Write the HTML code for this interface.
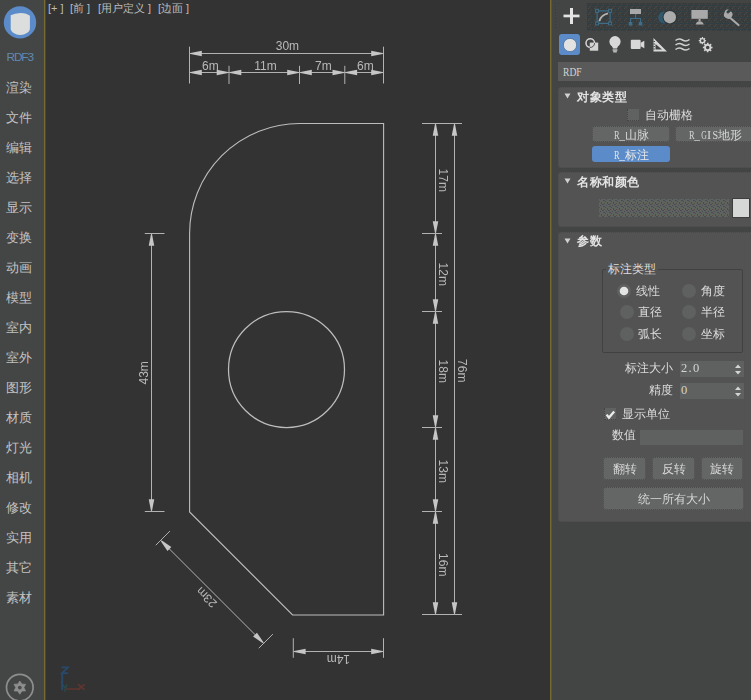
<!DOCTYPE html>
<html><head><meta charset="utf-8"><style>
*{margin:0;padding:0;box-sizing:border-box}
html,body{width:751px;height:700px;overflow:hidden;background:#333}
body{position:relative;font-family:'Liberation Sans',sans-serif}
.a{position:absolute}
#side{left:0;top:0;width:44px;height:700px;background:#444545}
#gl1{left:43px;top:0;width:3px;height:700px;background:linear-gradient(90deg,#43464a 0 1px,#756a32 1px 2px,#4b4637 2px 3px)}
#vp{left:46px;top:0;width:504px;height:700px;background:#333333}
#gl2{left:550px;top:0;width:2px;height:700px;background:linear-gradient(90deg,#756a32 0 1px,#5c533a 1px 2px)}
#panel{left:552px;top:0;width:199px;height:700px;background:#434544}
.menu{position:absolute;left:6px;font-size:13px;color:#c2c2c2;line-height:16px;letter-spacing:0px}
.vlabel{position:absolute;top:1px;font-size:11px;color:#bdbdbd;line-height:14px;white-space:pre}
</style></head><body>
<div class="a" id="side"></div>
<div class="a" id="gl1"></div>
<div class="a" id="vp"></div>
<div class="a" id="gl2"></div>
<div class="a" id="panel"></div>
<svg class="a" style="left:0;top:0" width="44" height="44"><circle cx="20" cy="22.4" r="16.2" fill="#5b8bc8"/>
<path d="M10.7 15.2 Q14.5 13 20.7 12.9 Q26.8 13 29.9 15.8 L29.9 28.8 C29.6 32.2 25.2 34.9 20.2 35 C15.2 34.9 11 32.2 10.7 28.8 Z" fill="#dcdedd"/></svg>
<div class="a" style="left:6.5px;top:50px;font-size:11.8px;color:#6089b3;line-height:14px;letter-spacing:-1.1px">RDF3</div>
<div class="menu" style="top:80px">渲染</div>
<div class="menu" style="top:110px">文件</div>
<div class="menu" style="top:140px">编辑</div>
<div class="menu" style="top:170px">选择</div>
<div class="menu" style="top:200px">显示</div>
<div class="menu" style="top:230px">变换</div>
<div class="menu" style="top:260px">动画</div>
<div class="menu" style="top:290px">模型</div>
<div class="menu" style="top:320px">室内</div>
<div class="menu" style="top:350px">室外</div>
<div class="menu" style="top:380px">图形</div>
<div class="menu" style="top:410px">材质</div>
<div class="menu" style="top:440px">灯光</div>
<div class="menu" style="top:470px">相机</div>
<div class="menu" style="top:500px">修改</div>
<div class="menu" style="top:530px">实用</div>
<div class="menu" style="top:560px">其它</div>
<div class="menu" style="top:590px">素材</div>
<svg class="a" style="left:0;top:668px" width="44" height="32">
<circle cx="19.8" cy="19.6" r="13.3" fill="none" stroke="#8e8e8e" stroke-width="1.7"/>
<path d="M19.80 13.00 L21.80 16.14 L25.52 16.30 L23.80 19.60 L25.52 22.90 L21.80 23.06 L19.80 26.20 L17.80 23.06 L14.08 22.90 L15.80 19.60 L14.08 16.30 L17.80 16.14 Z" fill="#8e8e8e" stroke="#8e8e8e" stroke-width="0.8" stroke-linejoin="round"/>
<circle cx="19.8" cy="19.6" r="1.9" fill="#4a4b4b"/></svg>
<div class="vlabel" style="left:48px">[+ ]</div><div class="vlabel" style="left:70px">[前 ]</div><div class="vlabel" style="left:98px">[用户定义 ]</div><div class="vlabel" style="left:158px">[边面 ]</div>
<svg class="a" style="left:55px;top:660px" width="40" height="40">
<path d="M6.6 7.4 H13 L7 13.2 H13.2" stroke="#29496a" stroke-width="1.8" fill="none"/>
<line x1="7.2" y1="13" x2="7.2" y2="30" stroke="#29496a" stroke-width="2"/>
<path d="M8 24.5 L10 28 M12 24.5 L9.5 31.5" stroke="#2c4a4a" stroke-width="1.5" fill="none"/>
<line x1="11.5" y1="29" x2="25" y2="29" stroke="#5c3530" stroke-width="1.6"/>
<path d="M23 24.3 L29.6 29.8 M29.6 24.3 L23 29.8" stroke="#5c3530" stroke-width="1.8" fill="none"/></svg>
<svg style="position:absolute;left:0;top:0;will-change:transform" width="751" height="700"><path d="M383.6 123.5 L383.6 615 L292.6 615 L189.6 512 L189.6 233.5 A110 110 0 0 1 299.6 123.5 Z" fill="none" stroke="#bdbdbd" stroke-width="1.1"/><circle cx="286.5" cy="369.5" r="58" fill="none" stroke="#bdbdbd" stroke-width="1.25"/><line x1="189.50" y1="46.70" x2="189.50" y2="83.50" stroke="#b2b2b2" stroke-width="1"/><line x1="383.50" y1="46.70" x2="383.50" y2="83.50" stroke="#b2b2b2" stroke-width="1"/><line x1="189.50" y1="53.50" x2="383.50" y2="53.50" stroke="#b2b2b2" stroke-width="1"/><polygon points="190.50,52.90 201.80,50.75 201.80,56.25 190.50,54.10" fill="#c6c6c6"/><polygon points="382.50,54.10 371.20,56.25 371.20,50.75 382.50,52.90" fill="#c6c6c6"/><text x="287.40" y="46.30" transform="rotate(0 287.40 46.30)" text-anchor="middle" dominant-baseline="central" font-family="Liberation Sans" font-size="12" fill="#b9b9b9">30m</text><line x1="229.00" y1="65.80" x2="229.00" y2="84.00" stroke="#b2b2b2" stroke-width="1"/><line x1="299.50" y1="65.80" x2="299.50" y2="84.00" stroke="#b2b2b2" stroke-width="1"/><line x1="344.80" y1="65.80" x2="344.80" y2="84.00" stroke="#b2b2b2" stroke-width="1"/><line x1="189.50" y1="72.50" x2="229.00" y2="72.50" stroke="#b2b2b2" stroke-width="1"/><polygon points="190.50,71.90 201.80,69.75 201.80,75.25 190.50,73.10" fill="#c6c6c6"/><polygon points="228.00,73.10 216.70,75.25 216.70,69.75 228.00,71.90" fill="#c6c6c6"/><text x="210.45" y="65.90" transform="rotate(0 210.45 65.90)" text-anchor="middle" dominant-baseline="central" font-family="Liberation Sans" font-size="12" fill="#b9b9b9">6m</text><line x1="229.00" y1="72.50" x2="299.50" y2="72.50" stroke="#b2b2b2" stroke-width="1"/><polygon points="230.00,71.90 241.30,69.75 241.30,75.25 230.00,73.10" fill="#c6c6c6"/><polygon points="298.50,73.10 287.20,75.25 287.20,69.75 298.50,71.90" fill="#c6c6c6"/><text x="265.45" y="65.90" transform="rotate(0 265.45 65.90)" text-anchor="middle" dominant-baseline="central" font-family="Liberation Sans" font-size="12" fill="#b9b9b9">11m</text><line x1="299.50" y1="72.50" x2="344.80" y2="72.50" stroke="#b2b2b2" stroke-width="1"/><polygon points="300.50,71.90 311.80,69.75 311.80,75.25 300.50,73.10" fill="#c6c6c6"/><polygon points="343.80,73.10 332.50,75.25 332.50,69.75 343.80,71.90" fill="#c6c6c6"/><text x="323.35" y="65.90" transform="rotate(0 323.35 65.90)" text-anchor="middle" dominant-baseline="central" font-family="Liberation Sans" font-size="12" fill="#b9b9b9">7m</text><line x1="344.80" y1="72.50" x2="383.50" y2="72.50" stroke="#b2b2b2" stroke-width="1"/><polygon points="345.80,71.90 357.10,69.75 357.10,75.25 345.80,73.10" fill="#c6c6c6"/><polygon points="382.50,73.10 371.20,75.25 371.20,69.75 382.50,71.90" fill="#c6c6c6"/><text x="365.35" y="65.90" transform="rotate(0 365.35 65.90)" text-anchor="middle" dominant-baseline="central" font-family="Liberation Sans" font-size="12" fill="#b9b9b9">6m</text><line x1="422.00" y1="123.50" x2="462.00" y2="123.50" stroke="#b2b2b2" stroke-width="1"/><line x1="422.00" y1="614.50" x2="462.00" y2="614.50" stroke="#b2b2b2" stroke-width="1"/><line x1="422.00" y1="233.50" x2="442.00" y2="233.50" stroke="#b2b2b2" stroke-width="1"/><line x1="422.00" y1="311.50" x2="442.00" y2="311.50" stroke="#b2b2b2" stroke-width="1"/><line x1="422.00" y1="427.50" x2="442.00" y2="427.50" stroke="#b2b2b2" stroke-width="1"/><line x1="422.00" y1="511.50" x2="442.00" y2="511.50" stroke="#b2b2b2" stroke-width="1"/><line x1="435.50" y1="123.50" x2="435.50" y2="233.50" stroke="#b2b2b2" stroke-width="1"/><polygon points="436.10,124.50 438.25,135.80 432.75,135.80 434.90,124.50" fill="#c6c6c6"/><polygon points="434.90,232.50 432.75,221.20 438.25,221.20 436.10,232.50" fill="#c6c6c6"/><text x="443.00" y="180.20" transform="rotate(90 443.00 180.20)" text-anchor="middle" dominant-baseline="central" font-family="Liberation Sans" font-size="12" fill="#b9b9b9">17m</text><line x1="435.50" y1="233.50" x2="435.50" y2="311.50" stroke="#b2b2b2" stroke-width="1"/><polygon points="436.10,234.50 438.25,245.80 432.75,245.80 434.90,234.50" fill="#c6c6c6"/><polygon points="434.90,310.50 432.75,299.20 438.25,299.20 436.10,310.50" fill="#c6c6c6"/><text x="443.00" y="274.20" transform="rotate(90 443.00 274.20)" text-anchor="middle" dominant-baseline="central" font-family="Liberation Sans" font-size="12" fill="#b9b9b9">12m</text><line x1="435.50" y1="311.50" x2="435.50" y2="427.50" stroke="#b2b2b2" stroke-width="1"/><polygon points="436.10,312.50 438.25,323.80 432.75,323.80 434.90,312.50" fill="#c6c6c6"/><polygon points="434.90,426.50 432.75,415.20 438.25,415.20 436.10,426.50" fill="#c6c6c6"/><text x="443.00" y="371.20" transform="rotate(90 443.00 371.20)" text-anchor="middle" dominant-baseline="central" font-family="Liberation Sans" font-size="12" fill="#b9b9b9">18m</text><line x1="435.50" y1="427.50" x2="435.50" y2="511.50" stroke="#b2b2b2" stroke-width="1"/><polygon points="436.10,428.50 438.25,439.80 432.75,439.80 434.90,428.50" fill="#c6c6c6"/><polygon points="434.90,510.50 432.75,499.20 438.25,499.20 436.10,510.50" fill="#c6c6c6"/><text x="443.00" y="471.20" transform="rotate(90 443.00 471.20)" text-anchor="middle" dominant-baseline="central" font-family="Liberation Sans" font-size="12" fill="#b9b9b9">13m</text><line x1="435.50" y1="511.50" x2="435.50" y2="614.50" stroke="#b2b2b2" stroke-width="1"/><polygon points="436.10,512.50 438.25,523.80 432.75,523.80 434.90,512.50" fill="#c6c6c6"/><polygon points="434.90,613.50 432.75,602.20 438.25,602.20 436.10,613.50" fill="#c6c6c6"/><text x="443.00" y="564.70" transform="rotate(90 443.00 564.70)" text-anchor="middle" dominant-baseline="central" font-family="Liberation Sans" font-size="12" fill="#b9b9b9">16m</text><line x1="454.50" y1="123.50" x2="454.50" y2="614.50" stroke="#b2b2b2" stroke-width="1"/><polygon points="455.10,124.50 457.25,135.80 451.75,135.80 453.90,124.50" fill="#c6c6c6"/><polygon points="453.90,613.50 451.75,602.20 457.25,602.20 455.10,613.50" fill="#c6c6c6"/><text x="462.00" y="370.70" transform="rotate(90 462.00 370.70)" text-anchor="middle" dominant-baseline="central" font-family="Liberation Sans" font-size="12" fill="#b9b9b9">76m</text><line x1="144.80" y1="233.50" x2="164.50" y2="233.50" stroke="#b2b2b2" stroke-width="1"/><line x1="144.80" y1="511.50" x2="164.50" y2="511.50" stroke="#b2b2b2" stroke-width="1"/><line x1="151.50" y1="233.50" x2="151.50" y2="511.50" stroke="#b2b2b2" stroke-width="1"/><polygon points="152.10,234.50 154.25,245.80 148.75,245.80 150.90,234.50" fill="#c6c6c6"/><polygon points="150.90,510.50 148.75,499.20 154.25,499.20 152.10,510.50" fill="#c6c6c6"/><text x="144.30" y="372.80" transform="rotate(-90 144.30 372.80)" text-anchor="middle" dominant-baseline="central" font-family="Liberation Sans" font-size="12" fill="#b9b9b9">43m</text><line x1="293.30" y1="638.20" x2="293.30" y2="657.80" stroke="#b2b2b2" stroke-width="1"/><line x1="383.50" y1="638.20" x2="383.50" y2="657.80" stroke="#b2b2b2" stroke-width="1"/><line x1="293.30" y1="651.50" x2="383.50" y2="651.50" stroke="#b2b2b2" stroke-width="1"/><polygon points="294.30,650.90 305.60,648.75 305.60,654.25 294.30,652.10" fill="#c6c6c6"/><polygon points="382.50,652.10 371.20,654.25 371.20,648.75 382.50,650.90" fill="#c6c6c6"/><text x="338.40" y="659.30" transform="rotate(180 338.40 659.30)" text-anchor="middle" dominant-baseline="central" font-family="Liberation Sans" font-size="12" fill="#b9b9b9">14m</text><line x1="160.72" y1="540.28" x2="263.72" y2="643.28" stroke="#b2b2b2" stroke-width="1"/><polygon points="161.85,540.56 171.36,547.03 167.47,550.92 161.00,541.41" fill="#c6c6c6"/><polygon points="262.59,643.00 253.08,636.53 256.97,632.64 263.44,642.15" fill="#c6c6c6"/><line x1="155.77" y1="545.23" x2="169.91" y2="531.09" stroke="#b2b2b2" stroke-width="1"/><line x1="258.77" y1="648.23" x2="272.91" y2="634.09" stroke="#b2b2b2" stroke-width="1"/><text x="206.71" y="597.29" transform="rotate(225 206.71 597.29)" text-anchor="middle" dominant-baseline="central" font-family="Liberation Sans" font-size="12" fill="#b9b9b9">23m</text></svg><svg class="a" style="left:552px;top:0" width="199" height="60"><line x1="3.5" y1="3" x2="3.5" y2="29" stroke="#2e3f44" stroke-dasharray="1 2"/><line x1="3" y1="3.5" x2="9" y2="3.5" stroke="#2e3f44" stroke-dasharray="1 2"/><rect x="11.5" y="14.6" width="16" height="2.7" fill="#e4e4e4"/><rect x="18" y="8" width="3" height="16" fill="#e4e4e4"/></svg><svg class="a" style="left:587px;top:3px" width="164" height="28"><defs><pattern id="dith" width="6" height="6" patternUnits="userSpaceOnUse"><rect width="6" height="6" fill="#3c3d3d"/><rect x="0" y="0" width="1" height="1" fill="#2b3c42"/><rect x="2" y="0" width="1" height="1" fill="#2b3c42"/><rect x="4" y="1" width="1" height="1" fill="#5b3a33"/><rect x="1" y="2" width="1" height="1" fill="#2b3c42"/><rect x="3" y="2" width="1" height="1" fill="#2b3c42"/><rect x="5" y="2" width="1" height="1" fill="#2b3c42"/><rect x="0" y="4" width="1" height="1" fill="#2b3c42"/><rect x="2" y="4" width="1" height="1" fill="#5b3a33"/><rect x="4" y="4" width="1" height="1" fill="#2b3c42"/><rect x="1" y="5" width="1" height="1" fill="#4a4a4a"/><rect x="3" y="3" width="1" height="1" fill="#4a4a4a"/><rect x="5" y="5" width="1" height="1" fill="#2b3c42"/></pattern></defs><rect width="164" height="28" fill="url(#dith)"/></svg><svg class="a" style="left:587px;top:0" width="164" height="60"><path d="M10.1 12 V22.4 M11 23.4 H22 M23.1 12 V22.4 M11 10.8 H22" stroke="#3f6c86" stroke-width="1.2" fill="none"/><rect x="8.6" y="9.3" width="3" height="3" fill="none" stroke="#3f6c86" stroke-width="1"/><rect x="21.6" y="9.3" width="3" height="3" fill="none" stroke="#3f6c86" stroke-width="1"/><rect x="8.6" y="21.9" width="3" height="3" fill="none" stroke="#3f6c86" stroke-width="1"/><rect x="21.6" y="21.9" width="3" height="3" fill="none" stroke="#3f6c86" stroke-width="1"/><path d="M12.3 21.2 Q14 15 21 13.4" stroke="#b4b4b4" stroke-width="1.8" fill="none"/><rect x="43" y="9" width="11" height="5" fill="#a9a9a9"/><path d="M48.6 14 V18.2 M43 18.5 H54 M43.5 18.5 V22 M53.5 18.5 V22" stroke="#3f6c86" stroke-width="1.2" fill="none"/><rect x="41.7" y="22" width="3.6" height="3.6" fill="#3f6c86"/><rect x="51.7" y="22" width="3.6" height="3.6" fill="#3f6c86"/><circle cx="77.2" cy="17.4" r="6" fill="#30596e"/><circle cx="82.8" cy="17.2" r="7.3" fill="#2f3537"/><circle cx="82.8" cy="17.2" r="6.2" fill="#acacac"/><rect x="104.4" y="10" width="16.4" height="8.8" fill="#a9a9a9"/><rect x="111.6" y="18.8" width="2" height="2.6" fill="#a9a9a9"/><path d="M108.6 24.6 Q109.5 21.2 112.6 21.2 Q115.8 21.2 116.8 24.6 Z" fill="#a9a9a9"/><path d="M141 16 L151.5 25" stroke="#a9a9a9" stroke-width="2.1" stroke-linecap="round"/><path d="M137.5 12.5 A4.2 4.2 0 1 0 143.8 11.2 L141.6 13.6 L139.8 13.3 L139.5 11.5 L141.8 9.3 A4.2 4.2 0 0 0 137.5 12.5 Z" fill="#a9a9a9"/></svg><svg class="a" style="left:552px;top:30px" width="199" height="30"><rect x="7" y="4" width="21" height="21" rx="3" fill="#5b8bc9"/><circle cx="18" cy="15" r="6.6" fill="#e2e2e2" stroke="#3f5f86" stroke-width="0.6"/><circle cx="38.3" cy="13.1" r="4.3" fill="none" stroke="#d4d4d4" stroke-width="1.5"/><rect x="37.8" y="12.6" width="8.4" height="8.1" fill="#d4d4d4"/><path d="M37.8 17.4 A4.3 4.3 0 0 0 42.6 13.1" stroke="#505050" stroke-width="1" fill="none"/><circle cx="63" cy="11.6" r="5.6" fill="#d8d8d8"/><path d="M59.2 14 L61 18.6 H65 L66.8 14 Z" fill="#d8d8d8"/><rect x="60.6" y="19.4" width="4.8" height="1.3" fill="#d8d8d8"/><rect x="61.2" y="21.2" width="3.6" height="1.2" fill="#d8d8d8"/><rect x="78.8" y="9.8" width="9.8" height="9.3" rx="1" fill="#d8d8d8"/><path d="M88.6 12.8 L92.3 10.8 V18.2 L88.6 16.2 Z" fill="#d8d8d8"/><path d="M101.5 8 V21.5 H115 Z M103.5 14 V19.5 H110 Z" fill="#d8d8d8" fill-rule="evenodd"/><path d="M101.5 11.5 H103 M101.5 14 H103 M101.5 16.5 H103 M101.5 19 H103" stroke="#444546" stroke-width="0.9"/><path d="M123.5 10.5 Q127 7.8 130.5 10 T137.5 9.5 M123.5 15 Q127 12.3 130.5 14.5 T137.5 14 M123.5 19.5 Q127 16.8 130.5 19 T137.5 18.5" stroke="#d0d0d0" stroke-width="1.5" fill="none"/><path d="M154.04 10.05 L154.04 11.35 L153.11 11.41 L152.70 12.30 L153.44 12.82 L152.52 13.74 L151.82 13.12 L150.89 13.46 L151.05 14.34 L149.75 14.34 L149.69 13.41 L148.80 13.00 L148.28 13.74 L147.36 12.82 L147.98 12.12 L147.64 11.19 L146.76 11.35 L146.76 10.05 L147.69 9.99 L148.10 9.10 L147.36 8.58 L148.28 7.66 L148.98 8.28 L149.91 7.94 L149.75 7.06 L151.05 7.06 L151.11 7.99 L152.00 8.40 L152.52 7.66 L153.44 8.58 L152.82 9.28 L153.16 10.21 Z M151.80 10.70 A1.4 1.4 0 1 0 149.00 10.70 A1.4 1.4 0 1 0 151.80 10.70 Z" fill="#d4d4d4" fill-rule="evenodd"/><path d="M160.52 16.64 L160.52 18.36 L159.28 18.43 L158.74 19.62 L159.72 20.30 L158.50 21.52 L157.57 20.69 L156.35 21.14 L156.56 22.32 L154.84 22.32 L154.77 21.08 L153.58 20.54 L152.90 21.52 L151.68 20.30 L152.51 19.37 L152.06 18.15 L150.88 18.36 L150.88 16.64 L152.12 16.57 L152.66 15.38 L151.68 14.70 L152.90 13.48 L153.83 14.31 L155.05 13.86 L154.84 12.68 L156.56 12.68 L156.63 13.92 L157.82 14.46 L158.50 13.48 L159.72 14.70 L158.89 15.63 L159.34 16.85 Z M157.50 17.50 A1.8 1.8 0 1 0 153.90 17.50 A1.8 1.8 0 1 0 157.50 17.50 Z" fill="#d4d4d4" fill-rule="evenodd"/></svg><div class="a" style="left:558px;top:62px;width:193px;height:19px;background:#5a5a5a"></div><div class="a" style="left:563px;top:64px;font:13px 'Liberation Serif',serif;color:#d4d4d4;line-height:15px;transform:scaleX(0.74);transform-origin:0 0">RDF</div><div class="a" style="left:558px;top:87px;width:200px;height:81px;background:#535353;border:1px dotted #4a4a4a;border-radius:3px"></div><svg class="a" style="left:564px;top:93px" width="8" height="7"><path d="M0.5 0.5 H6.5 L3.5 5.5 Z" fill="#d0d0d0"/></svg><div class="a" style="left:577px;top:90px;font-size:12px;font-weight:bold;color:#e4e4e4;line-height:15px;letter-spacing:0.5px">对象类型</div><div class="a" style="left:558px;top:172px;width:200px;height:55px;background:#535353;border:1px dotted #4a4a4a;border-radius:3px"></div><svg class="a" style="left:564px;top:178px" width="8" height="7"><path d="M0.5 0.5 H6.5 L3.5 5.5 Z" fill="#d0d0d0"/></svg><div class="a" style="left:577px;top:175px;font-size:12px;font-weight:bold;color:#e4e4e4;line-height:15px;letter-spacing:0.5px">名称和颜色</div><div class="a" style="left:558px;top:232px;width:200px;height:290px;background:#535353;border:1px dotted #4a4a4a;border-radius:3px"></div><svg class="a" style="left:564px;top:238px" width="8" height="7"><path d="M0.5 0.5 H6.5 L3.5 5.5 Z" fill="#d0d0d0"/></svg><div class="a" style="left:577px;top:234px;font-size:12px;font-weight:bold;color:#e4e4e4;line-height:15px;letter-spacing:0.5px">参数</div><div class="a" style="left:627px;top:109px;width:12px;height:12px;background:#606161;border-left:1px dotted #444;border-bottom:1px dotted #444"></div><div class="a" style="left:645px;top:108px;font-size:12px;color:#dcdcdc;line-height:15px">自动栅格</div><div class="a" style="left:592px;top:126px;width:78px;height:16px;background:#646565;border:1px dotted #4a4a4a;border-radius:3px;color:#d8d8d8;font:12px 'Liberation Sans',sans-serif;line-height:16px;text-align:center;white-space:nowrap;overflow:hidden"><span style='display:inline-block;width:6px;text-align:center;font-family:Liberation Serif,serif;font-size:12.5px;transform:scaleX(0.67)'>R</span><span style='display:inline-block;width:6px;text-align:center;font-family:Liberation Serif,serif;font-size:12.5px;transform:scaleX(0.90)'>_</span>山脉</div><div class="a" style="left:675px;top:126px;width:80px;height:16px;background:#646565;border:1px dotted #4a4a4a;border-radius:3px;color:#d8d8d8;font:12px 'Liberation Sans',sans-serif;line-height:16px;text-align:center;white-space:nowrap;overflow:hidden"><span style='display:inline-block;width:6px;text-align:center;font-family:Liberation Serif,serif;font-size:12.5px;transform:scaleX(0.67)'>R</span><span style='display:inline-block;width:6px;text-align:center;font-family:Liberation Serif,serif;font-size:12.5px;transform:scaleX(0.90)'>_</span><span style='display:inline-block;width:6px;text-align:center;font-family:Liberation Serif,serif;font-size:12.5px;transform:scaleX(0.62)'>G</span><span style='display:inline-block;width:6px;text-align:center;font-family:Liberation Serif,serif;font-size:12.5px;transform:scaleX(1.00)'>I</span><span style='display:inline-block;width:6px;text-align:center;font-family:Liberation Serif,serif;font-size:12.5px;transform:scaleX(0.81)'>S</span>地形</div><div class="a" style="left:592px;top:146px;width:78px;height:16px;background:#5b8bc9;border:1px dotted #5b8bc9;border-radius:3px;color:#e8e8e8;font:12px 'Liberation Sans',sans-serif;line-height:16px;text-align:center;white-space:nowrap;overflow:hidden"><span style='display:inline-block;width:6px;text-align:center;font-family:Liberation Serif,serif;font-size:12.5px;transform:scaleX(0.67)'>R</span><span style='display:inline-block;width:6px;text-align:center;font-family:Liberation Serif,serif;font-size:12.5px;transform:scaleX(0.90)'>_</span>标注</div><svg class="a" style="left:599px;top:199px" width="130" height="18"><defs><pattern id="nf" width="6" height="6" patternUnits="userSpaceOnUse"><rect width="6" height="6" fill="#5e635e"/><rect x="1" y="0" width="1" height="1" fill="#4b4a58"/><rect x="4" y="1" width="2" height="1" fill="#4b4a58"/><rect x="0" y="2" width="1" height="1" fill="#4b4a58"/><rect x="2" y="3" width="1" height="2" fill="#4b4a58"/><rect x="5" y="4" width="1" height="1" fill="#5a4c44"/><rect x="3" y="5" width="2" height="1" fill="#4b4a58"/></pattern></defs><rect width="130" height="18" fill="url(#nf)"/></svg><div class="a" style="left:732px;top:198px;width:18px;height:20px;background:#d6d8d8;border:1px solid #3e3e3e"></div><div class="a" style="left:602px;top:269px;width:141px;height:84px;border:1px solid #414141;border-radius:2px"></div><div class="a" style="left:606px;top:262px;padding:0 2px;background:#535353;font-size:12px;color:#dcdcdc;line-height:14px">标注类型</div><svg class="a" style="left:616.3px;top:283px" width="16" height="16"><circle cx="8" cy="8" r="7" fill="#5f6060"/><circle cx="8" cy="8" r="4.3" fill="#e4e4e4"/></svg><div class="a" style="left:635.8px;top:284px;font-size:12px;color:#dcdcdc;line-height:14px">线性</div><svg class="a" style="left:681px;top:283px" width="16" height="16"><circle cx="8" cy="8" r="7" fill="#5f6060"/></svg><div class="a" style="left:700.5px;top:284px;font-size:12px;color:#dcdcdc;line-height:14px">角度</div><svg class="a" style="left:618.8px;top:304.4px" width="16" height="16"><circle cx="8" cy="8" r="7" fill="#5f6060"/></svg><div class="a" style="left:638.3px;top:305.4px;font-size:12px;color:#dcdcdc;line-height:14px">直径</div><svg class="a" style="left:681px;top:304.4px" width="16" height="16"><circle cx="8" cy="8" r="7" fill="#5f6060"/></svg><div class="a" style="left:700.5px;top:305.4px;font-size:12px;color:#dcdcdc;line-height:14px">半径</div><svg class="a" style="left:618.8px;top:326.3px" width="16" height="16"><circle cx="8" cy="8" r="7" fill="#5f6060"/></svg><div class="a" style="left:638.3px;top:327.3px;font-size:12px;color:#dcdcdc;line-height:14px">弧长</div><svg class="a" style="left:681px;top:326.3px" width="16" height="16"><circle cx="8" cy="8" r="7" fill="#5f6060"/></svg><div class="a" style="left:700.5px;top:327.3px;font-size:12px;color:#dcdcdc;line-height:14px">坐标</div><div class="a" style="left:625px;top:361px;font-size:12px;color:#dcdcdc;line-height:14px">标注大小</div><div class="a" style="left:680px;top:361px;width:64px;height:16px;background:#5f6060"></div><div class="a" style="left:681px;top:360.5px;font:12.5px 'Liberation Serif',serif;color:#d4d4d4;line-height:14px"><span style="display:inline-block;width:6px;text-align:center">2</span><span style="display:inline-block;width:6px;text-align:center">.</span><span style="display:inline-block;width:6px;text-align:center">0</span></div><svg class="a" style="left:734px;top:363px" width="9" height="13"><path d="M1 5 L4 1.5 L7 5 Z M1 8 L4 11.5 L7 8 Z" fill="#d4d4d4"/></svg><div class="a" style="left:649px;top:383px;font-size:12px;color:#dcdcdc;line-height:14px">精度</div><div class="a" style="left:680px;top:383px;width:64px;height:16px;background:#5f6060"></div><div class="a" style="left:681px;top:382.5px;font:12.5px 'Liberation Serif',serif;color:#d4d4d4;line-height:14px"><span style="display:inline-block;width:6px;text-align:center">0</span></div><svg class="a" style="left:734px;top:385px" width="9" height="13"><path d="M1 5 L4 1.5 L7 5 Z M1 8 L4 11.5 L7 8 Z" fill="#d4d4d4"/></svg><div class="a" style="left:604px;top:408px;width:12px;height:12px;background:#606161;border-left:1px dotted #444;border-bottom:1px dotted #444"></div><svg class="a" style="left:604px;top:408px" width="13" height="13"><path d="M2.6 6.6 L5 9.6 L10.2 3.6" stroke="#ececec" stroke-width="2.3" fill="none"/></svg><div class="a" style="left:622px;top:407px;font-size:12px;color:#dcdcdc;line-height:14px">显示单位</div><div class="a" style="left:612px;top:428px;font-size:12px;color:#dcdcdc;line-height:14px">数值</div><div class="a" style="left:640px;top:430px;width:103px;height:15px;background:#5f6060"></div><div class="a" style="left:603px;top:457px;width:43px;height:23px;background:#646565;border:1px dotted #4a4a4a;border-radius:3px;color:#d8d8d8;font:12px 'Liberation Sans',sans-serif;line-height:23px;text-align:center;white-space:nowrap;overflow:hidden">翻转</div><div class="a" style="left:652px;top:457px;width:43px;height:23px;background:#646565;border:1px dotted #4a4a4a;border-radius:3px;color:#d8d8d8;font:12px 'Liberation Sans',sans-serif;line-height:23px;text-align:center;white-space:nowrap;overflow:hidden">反转</div><div class="a" style="left:701px;top:457px;width:42px;height:23px;background:#646565;border:1px dotted #4a4a4a;border-radius:3px;color:#d8d8d8;font:12px 'Liberation Sans',sans-serif;line-height:23px;text-align:center;white-space:nowrap;overflow:hidden">旋转</div><div class="a" style="left:603px;top:487px;width:141px;height:23px;background:#646565;border:1px dotted #4a4a4a;border-radius:3px;color:#d8d8d8;font:12px 'Liberation Sans',sans-serif;line-height:23px;text-align:center;white-space:nowrap;overflow:hidden">统一所有大小</div></body></html>
